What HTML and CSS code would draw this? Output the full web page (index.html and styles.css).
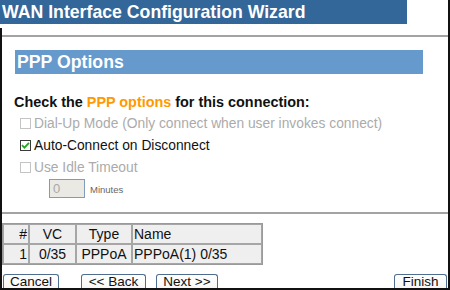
FILE: index.html
```html
<!DOCTYPE html>
<html>
<head>
<meta charset="utf-8">
<link rel="stylesheet" href="styles.css">
</head>
<body>
<div class="page">
  <div class="titlebar">WAN Interface Configuration Wizard</div>
  <div class="main">
    <div class="rule"></div>
    <div class="section">
      <div class="bar">PPP Options</div>
      <div class="prompt">Check the <span class="hl">PPP options</span> for this connection:</div>
      <div class="opt disabled"><span class="cb"></span>Dial-Up Mode (Only connect when user invokes connect)</div>
      <div class="opt"><span class="cb checked"><svg width="9" height="9" viewBox="0 0 9 9"><path d="M1 4.2 L3.4 6.6 L8 1.8" fill="none" stroke="#21a621" stroke-width="1.8"/></svg></span>Auto-Connect on Disconnect</div>
      <div class="opt disabled"><span class="cb"></span>Use Idle Timeout</div>
      <div class="timeout"><span class="field">0</span><span class="unit">Minutes</span></div>
    </div>
    <div class="rule rule2"></div>
    <table class="vcs">
      <tr><td class="c-num">#</td><td class="c-vc">VC</td><td class="c-type">Type</td><td class="c-name">Name</td></tr>
      <tr><td class="c-num">1</td><td class="c-vc">0/35</td><td class="c-type">PPPoA</td><td class="c-name">PPPoA(1) 0/35</td></tr>
    </table>
    <div class="buttons">
      <button class="btn b-cancel">Cancel</button>
      <button class="btn b-back">&lt;&lt; Back</button>
      <button class="btn b-next">Next &gt;&gt;</button>
      <button class="btn b-finish">Finish</button>
    </div>
  </div>
</div>
</body>
</html>
```

FILE: styles.css
```css
html, body { margin: 0; padding: 0; background: #fff; }
body { font-family: "Liberation Sans", Arial, sans-serif; }
.page {
  width: 450px; height: 290px; box-sizing: border-box;
  border-right: 2px solid #111;
  display: flex; flex-direction: column; overflow: hidden;
}
.titlebar {
  width: 407px; height: 24px; box-sizing: border-box;
  background: #336699; color: #fff;
  font-weight: bold; font-size: 17.7px; line-height: 24px;
  padding-left: 2px; white-space: nowrap;
}
.main {
  flex: 1; margin-top: 4px;
  border-left: 2px solid #111; border-bottom: 2px solid #111;
  display: flex; flex-direction: column; overflow: hidden;
}
.rule { height: 2px; background: #a3a3a3; margin-top: 7px; flex: none; }
.section { padding-left: 12px; }
.bar {
  margin-top: 13px; margin-left: 1px;
  width: 408px; height: 24px; box-sizing: border-box;
  background: #6699cc; color: #fff;
  font-weight: bold; font-size: 17.7px; line-height: 24px; padding-left: 2px;
}
.prompt {
  margin-top: 19px; font-weight: bold; font-size: 14.4px; line-height: 18px; color: #111;
  white-space: nowrap;
}
.hl { color: #ff9900; }
.opt {
  display: flex; align-items: center; height: 22px; padding-left: 6px;
  font-size: 13.8px; color: #111; white-space: nowrap;
}
.prompt + .opt { margin-top: 1px; }
.opt.disabled { color: #ababab; }
.cb {
  width: 11px; height: 11px; box-sizing: border-box; flex: none;
  border: 1px solid #c4c4c4; background: #fff; margin-right: 3px; margin-top: 1px;
  display: flex; align-items: center; justify-content: center;
}
.cb.checked { border-color: #3a3a3a; }
.timeout { display: flex; align-items: center; margin-top: 1px; padding-left: 35px; }
.field {
  width: 36px; height: 19px; box-sizing: border-box;
  border: 1px solid #7f9db9; background: #ebe9e4; color: #a8a8a8;
  font-size: 13px; line-height: 17px; padding-left: 3px;
}
.unit { margin-left: 5px; font-size: 9.5px; color: #666; margin-top: 2px; }
.rule2 { margin-top: 14px; }
.vcs {
  margin-top: 9px; border-collapse: separate; border-spacing: 0;
  border: 1px solid #9a9a9a; width: 261px; font-size: 14px; color: #111;
}
.vcs td {
  border: 1px solid #a6a6a6; background: #efefef; height: 18px; padding: 0 1px; line-height: 16px;
  white-space: nowrap;
}
.c-num { width: 22px; text-align: right; }
.c-vc { width: 43px; text-align: center; }
.c-type { width: 52px; text-align: center; }
.c-name { text-align: left; }
.buttons { display: flex; align-items: flex-start; margin-top: 9px; padding-left: 1px; padding-right: 1px; }
.btn {
  height: 17px; box-sizing: border-box; padding: 0;
  font-family: "Liberation Sans", Arial, sans-serif; font-size: 13.5px; line-height: 14px; color: #111;
  border: 1px solid #4f6d8f; border-bottom: 0; border-radius: 3px 3px 0 0;
  background: linear-gradient(#ffffff, #f6f5f1);
  display: flex; align-items: flex-start; justify-content: center;
}
.b-cancel { width: 56px; }
.b-back { width: 65px; margin-left: 22px; }
.b-next { width: 62px; margin-left: 10px; }
.b-finish { width: 53px; margin-left: auto; }
```
